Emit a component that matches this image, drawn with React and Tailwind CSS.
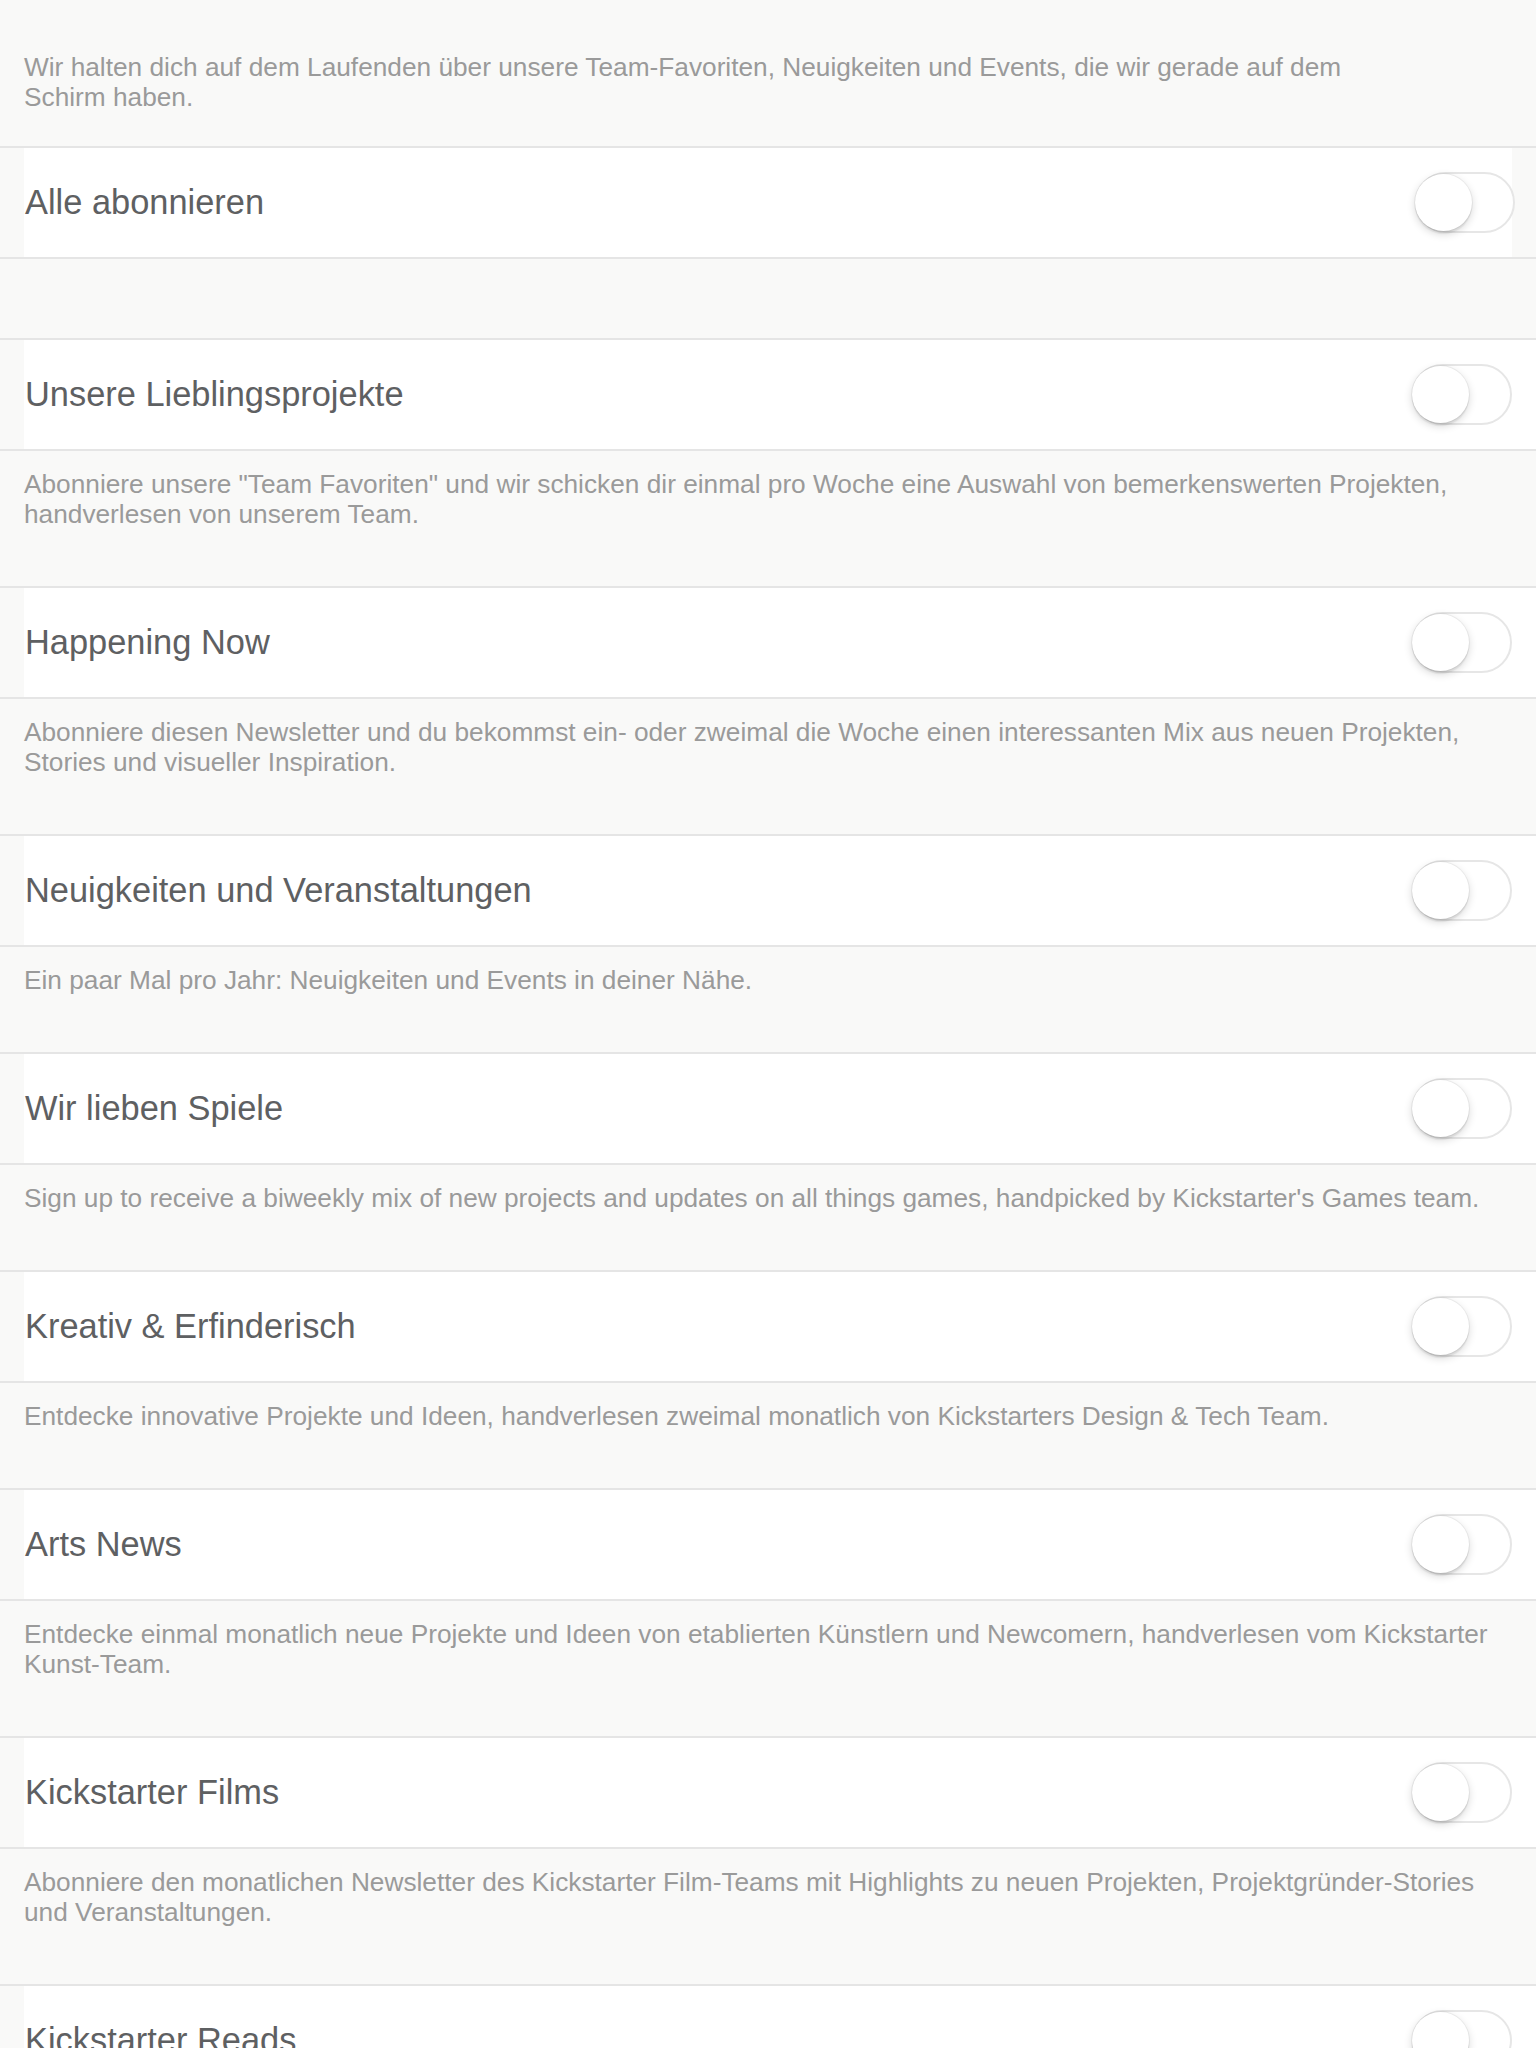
import React from 'react';

const newsletters = [
  {
    title: 'Unsere Lieblingsprojekte',
    text: 'Abonniere unsere "Team Favoriten" und wir schicken dir einmal pro Woche eine Auswahl von bemerkenswerten Projekten, handverlesen von unserem Team.',
  },
  {
    title: 'Happening Now',
    text: 'Abonniere diesen Newsletter und du bekommst ein- oder zweimal die Woche einen interessanten Mix aus neuen Projekten, Stories und visueller Inspiration.',
  },
  {
    title: 'Neuigkeiten und Veranstaltungen',
    text: 'Ein paar Mal pro Jahr: Neuigkeiten und Events in deiner Nähe.',
  },
  {
    title: 'Wir lieben Spiele',
    text: "Sign up to receive a biweekly mix of new projects and updates on all things games, handpicked by Kickstarter's Games team.",
  },
  {
    title: 'Kreativ & Erfinderisch',
    text: 'Entdecke innovative Projekte und Ideen, handverlesen zweimal monatlich von Kickstarters Design & Tech Team.',
  },
  {
    title: 'Arts News',
    text: 'Entdecke einmal monatlich neue Projekte und Ideen von etablierten Künstlern und Newcomern, handverlesen vom Kickstarter Kunst-Team.',
  },
  {
    title: 'Kickstarter Films',
    text: 'Abonniere den monatlichen Newsletter des Kickstarter Film-Teams mit Highlights zu neuen Projekten, Projektgründer-Stories und Veranstaltungen.',
  },
  {
    title: 'Kickstarter Reads',
    text: 'Abonniere den Newsletter des Kickstarter Publishing-Teams.',
  },
];

function Toggle({ className = '' }) {
  return (
    <div className={`relative w-[100px] h-[61px] rounded-full border-2 border-[#e6e6e6] bg-white shrink-0 ${className}`}>
      <div className="absolute left-[-2px] top-0 w-[57px] h-[57px] rounded-full bg-white shadow-[0_3px_8px_rgba(0,0,0,0.16),0_3px_1px_rgba(0,0,0,0.06),0_0_0_1px_rgba(0,0,0,0.05)]" />
    </div>
  );
}

function Row({ title, first }) {
  return (
    <div className="border-t-2 border-[#e5e5e5] pl-6">
      <div className={`h-[109px] bg-white flex items-center justify-between ${first ? 'mr-6' : 'pr-6'}`}>
        <span className="text-[34.4px] text-[#5e6062] pl-px">{title}</span>
        <Toggle className={first ? '-mr-[3px]' : ''} />
      </div>
    </div>
  );
}

export default function App() {
  return (
    <div className="h-[2048px] overflow-hidden bg-[#f9f9f8] font-['Liberation_Sans','Helvetica_Neue',Arial,sans-serif] antialiased">
      <p className="px-6 pt-[52px] pb-[34px] max-w-[1410px] text-[26.25px] leading-[30px] text-[#9a9a9a]">
        Wir halten dich auf dem Laufenden über unsere Team-Favoriten, Neuigkeiten und Events, die wir gerade auf dem Schirm haben.
      </p>

      <Row title="Alle abonnieren" first />
      <div className="border-t-2 border-[#e5e5e5] h-[81px]" />

      {newsletters.map((n) => (
        <div key={n.title}>
          <Row title={n.title} />
          <div className="border-t-2 border-[#e5e5e5] px-6 pt-[18px] pb-[57px]">
            <p className="text-[26.25px] leading-[30px] text-[#9a9a9a]">{n.text}</p>
          </div>
        </div>
      ))}
    </div>
  );
}
